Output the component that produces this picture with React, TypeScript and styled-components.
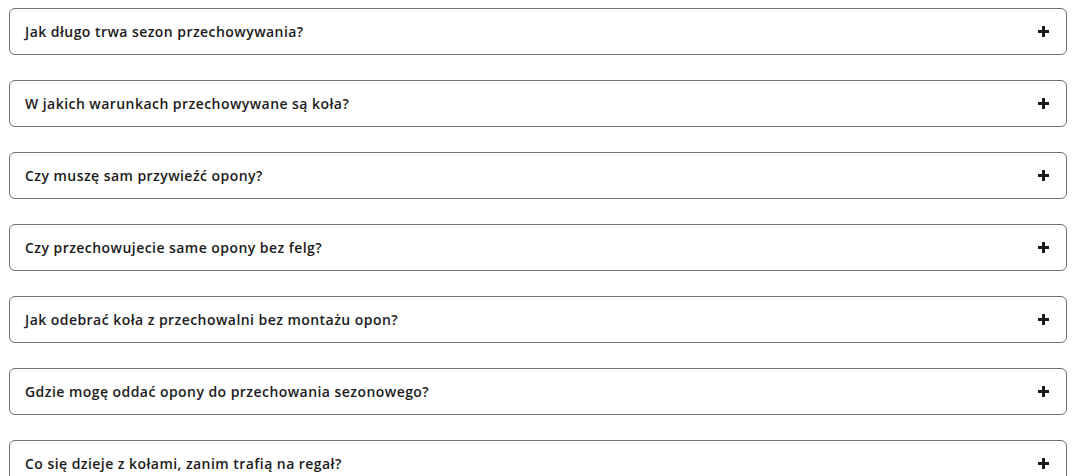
import React, { useState } from "react";
import styled, { createGlobalStyle } from "styled-components";

const questions = [
  "Jak długo trwa sezon przechowywania?",
  "W jakich warunkach przechowywane są koła?",
  "Czy muszę sam przywieźć opony?",
  "Czy przechowujecie same opony bez felg?",
  "Jak odebrać koła z przechowalni bez montażu opon?",
  "Gdzie mogę oddać opony do przechowania sezonowego?",
  "Co się dzieje z kołami, zanim trafią na regał?",
];

const GlobalStyle = createGlobalStyle`
  body {
    margin: 0;
    background: #fff;
    font-family: "Open Sans", "Noto Sans", sans-serif;
  }
`;

const FaqList = styled.div`
  display: flex;
  flex-direction: column;
  gap: 25px;
  padding: 8px 15px 0 9px;
`;

const Item = styled.div`
  border: 1px solid #6f6f6f;
  border-radius: 6px;
  background: #fff;
`;

const Header = styled.button`
  display: flex;
  align-items: center;
  justify-content: space-between;
  width: 100%;
  height: 45px;
  padding: 0 17px 0 15px;
  border: none;
  background: none;
  cursor: pointer;
  font-family: inherit;
  font-size: 14px;
  font-weight: 600;
  letter-spacing: 0.45px;
  color: #1b1b1b;
  text-align: left;
`;

const Plus = styled.span`
  position: relative;
  width: 11px;
  height: 11px;
  flex-shrink: 0;

  &::before,
  &::after {
    content: "";
    position: absolute;
    background: #1b1b1b;
  }
  &::before {
    left: 0;
    right: 0;
    top: 4px;
    height: 3px;
  }
  &::after {
    top: 0;
    bottom: 0;
    left: 4px;
    width: 3px;
  }
`;

const Answer = styled.div`
  padding: 0 15px 15px;
  font-size: 14px;
  color: #444;
`;

const App = () => {
  const [open, setOpen] = useState<number | null>(null);
  return (
    <>
      <GlobalStyle />
      <FaqList>
        {questions.map((q, i) => (
          <Item key={q}>
            <Header onClick={() => setOpen(open === i ? null : i)}>
              {q}
              <Plus />
            </Header>
            {open === i && <Answer>…</Answer>}
          </Item>
        ))}
      </FaqList>
    </>
  );
};

export default App;
